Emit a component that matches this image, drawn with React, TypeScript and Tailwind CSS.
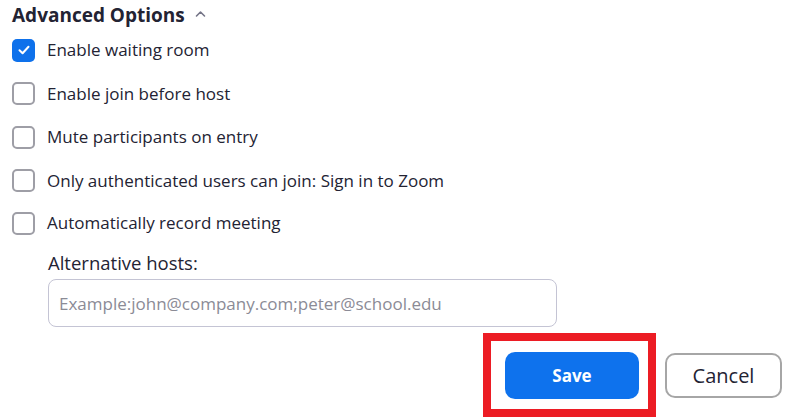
import React from "react";

const font = { fontFamily: '"Segoe UI", "Open Sans", "Noto Sans", sans-serif' };

function Box({ checked }: { checked?: boolean }) {
  if (checked) {
    return (
      <div className="w-[23px] h-[23px] rounded-[5px] bg-[#0e71eb] flex items-center justify-center shrink-0">
        <svg width="14" height="14" viewBox="0 0 14 14" fill="none">
          <path d="M2.5 7.2 L5.6 10.2 L11.5 3.8" stroke="white" strokeWidth="2" strokeLinecap="round" strokeLinejoin="round" />
        </svg>
      </div>
    );
  }
  return <div className="w-[23px] h-[23px] rounded-[5px] border-2 border-[#9e9ea6] bg-white shrink-0" />;
}

function Row({ label, checked, h }: { label: string; checked?: boolean; h: string }) {
  return (
    <div className={`flex items-center gap-[12px] ${h}`}>
      <Box checked={checked} />
      <span className="text-[17px] text-[#232333] leading-none mt-[-1px]">{label}</span>
    </div>
  );
}

export default function App() {
  return (
    <div className="w-[799px] h-[419px] bg-white overflow-hidden relative" style={font}>
      <div className="pl-[12px]">
        <div className="h-[28px] flex items-center gap-[10px] pt-[2px]">
          <span className="text-[19px] font-bold text-[#232333] leading-none">Advanced Options</span>
          <svg width="11" height="8" viewBox="0 0 11 8" fill="none" className="mt-[-2px]">
            <path d="M1.5 6 L5.5 2 L9.5 6" stroke="#747487" strokeWidth="1.6" strokeLinecap="round" strokeLinejoin="round" />
          </svg>
        </div>
        <Row label="Enable waiting room" checked h="h-[44px]" />
        <Row label="Enable join before host" h="h-[43px]" />
        <Row label="Mute participants on entry" h="h-[44px]" />
        <Row label="Only authenticated users can join: Sign in to Zoom" h="h-[43px]" />
        <Row label="Automatically record meeting" h="h-[42px]" />
        <div className="pl-[36px]">
          <div className="h-[35px] flex items-center pt-[4px]">
            <span className="text-[18.5px] text-[#232333] leading-none">Alternative hosts:</span>
          </div>
          <div className="w-[509px] h-[48px] rounded-[8px] border border-[#c4c4d4] flex items-center px-[10px]">
            <span className="text-[17px] text-[#8b8b96] leading-none">Example:john@company.com;peter@school.edu</span>
          </div>
        </div>
      </div>
      <div className="flex items-start mt-[6px] pl-[483px]">
        <div className="w-[173px] h-[84px] border-[8px] border-[#ec1c24] pl-[14px] pt-[11px]">
          <div className="w-[134px] h-[47px] rounded-[10px] bg-[#0e72ed] flex items-center justify-center">
            <span className="text-white font-bold text-[17px] leading-none">Save</span>
          </div>
        </div>
        <div className="ml-[9px] mt-[20px] w-[117px] h-[45px] rounded-[10px] border-2 border-[#a6a6a6] flex items-center justify-center">
          <span className="text-[20px] text-[#232333] leading-none">Cancel</span>
        </div>
      </div>
    </div>
  );
}
